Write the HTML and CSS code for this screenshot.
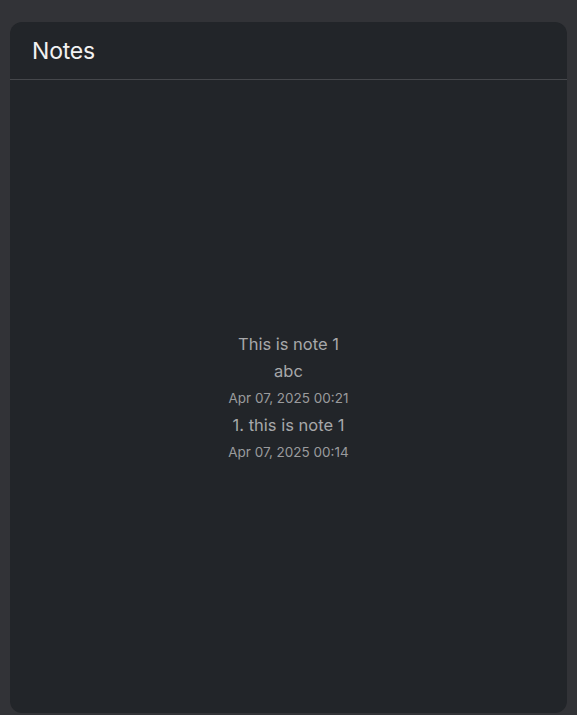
FILE: index.html
```html
<!DOCTYPE html>
<html>
<head>
<meta charset="utf-8">
<link rel="stylesheet" href="styles.css">
</head>
<body>
<div class="card">
  <div class="card-header"><h1 class="title">Notes</h1></div>
  <div class="card-body">
    <div class="notes">
      <div class="note-title">This is note 1</div>
      <div class="note-text">abc</div>
      <div class="note-date">Apr 07, 2025 00:21</div>
      <div class="note-text">1. this is note 1</div>
      <div class="note-date">Apr 07, 2025 00:14</div>
    </div>
  </div>
</div>
</body>
</html>
```
FILE: styles.css
```css
html, body {
  margin: 0;
  padding: 0;
  background: #323337;
  height: 100%;
}
body {
  font-family: "Inter", "Open Sans", sans-serif;
  padding: 22px 10px 2px 10px;
  box-sizing: border-box;
  overflow: hidden;
}
.card {
  background: #222529;
  border-radius: 12px;
  height: 691px;
  display: flex;
  flex-direction: column;
}
.card-header {
  height: 58px;
  border-bottom: 1px solid #45474b;
  display: flex;
  align-items: center;
  padding-left: 22px;
  box-sizing: border-box;
}
.title {
  margin: 0;
  font-size: 23px;
  font-weight: 400;
  color: #f2f2f2;
  letter-spacing: -0.2px;
}
.card-body {
  flex: 1;
  display: flex;
  align-items: center;
  justify-content: center;
  padding-top: 4px;
}
.notes {
  display: flex;
  flex-direction: column;
  align-items: center;
  color: #a7a8aa;
}
.note-title, .note-text {
  font-size: 16.5px;
  line-height: 27px;
}
.note-date {
  font-size: 13.5px;
  line-height: 27px;
  color: #9a9b9d;
}
```
